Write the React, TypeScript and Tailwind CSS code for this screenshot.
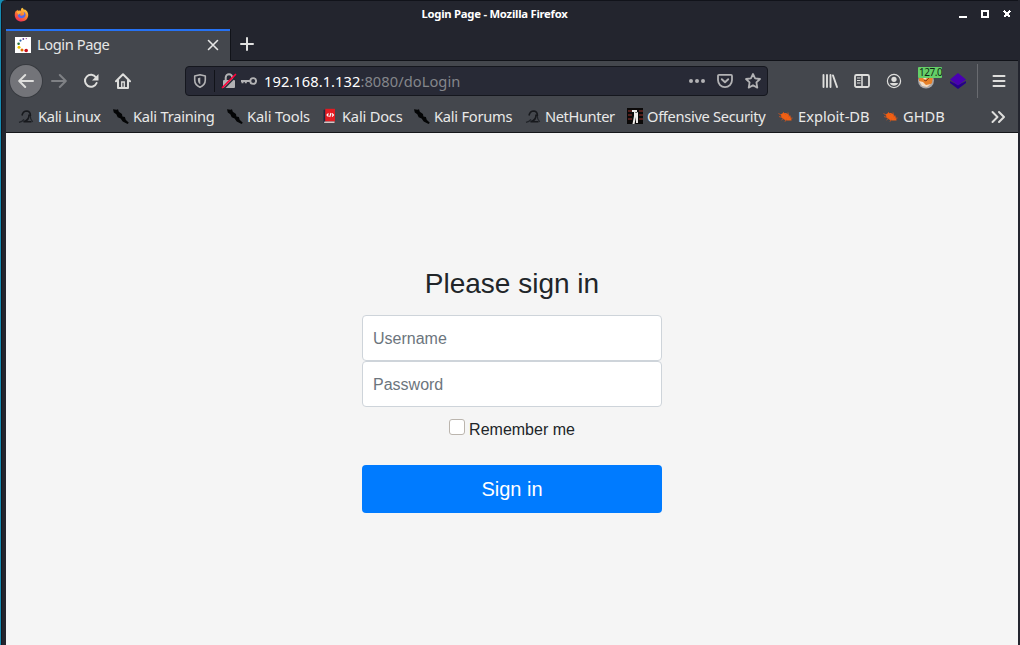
import React from "react";

type IconProps = { className?: string };

function FirefoxLogo({ className }: IconProps) {
  return (
    <svg viewBox="0 0 16 16" className={className}>
      <defs>
        <linearGradient id="fox" x1="0.8" y1="0" x2="0.25" y2="1">
          <stop offset="0" stopColor="#ffe04a" />
          <stop offset="0.45" stopColor="#ff8a2a" />
          <stop offset="1" stopColor="#f0285a" />
        </linearGradient>
      </defs>
      <path d="M8.8.7c1 .6 1.500 1.500 1.800 2.400.4-.1.7-.3.8-.7C14 4 15.200 6.200 15.200 8.500c0 4-3.200 6.900-7.200 6.900S.8 12.300.8 8.400c0-2 .6-3.600 1.700-4.900l.4 1 .8-1.700.8 1.200c1-.3 2-.4 2.900 0C7.100 2.600 7.700 1.500 8.800.7z" fill="url(#fox)" />
      <path d="M5 6.500c1 .1 1.700.2 2.700.1-.4.7-1.200.9-1.700 1.300.4 1.500 3 1.700 4.300.7 1.200-1 .7-2.600-.5-3.600 2 .6 3 2.100 2.500 4-.5 1.900-2.200 3-4.200 3-2.500 0-4.100-1.700-4.100-3.500 0-.8.300-1.500 1-2z" fill="#5368e8" />
      <path d="M2.800 5c1.100-.7 2.500-.8 4-.3l1.100 1.900-2 .6c-.7.5-.9 1-.7 1.700" fill="#ffad3b" />
    </svg>
  );
}

function DotsLogo() {
  return (
    <svg viewBox="0 0 16 16" className="h-4 w-4">
      <path fill="#fff" d="M0 0h16v16H0z" />
      <circle cx="11.300" cy="1.600" r=".7" fill="#a33b9c" />
      <circle cx="8.300" cy="2" r=".9" fill="#5b3d9a" />
      <circle cx="5.500" cy="3.600" r="1.100" fill="#3166ad" />
      <circle cx="3.600" cy="6.700" r="1.300" fill="#26723b" />
      <circle cx="4" cy="10.300" r="1.500" fill="#edc400" />
      <circle cx="7" cy="12.900" r="1.500" fill="#dc7100" />
      <circle cx="11.200" cy="13.500" r="1.800" fill="#cb101c" />
    </svg>
  );
}

function KaliDragon() {
  return (
    <svg viewBox="0 0 16 16" className="h-4 w-4">
      <path d="M1 14.400c2.500-.4 4-1.500 5-3M12.200 7.500c0 3 .6 4.600 2.600 6.400" fill="none" stroke="#202328" strokeWidth="1.200" />
      <path d="M4 7.500C4.500 4.500 6.500 3 9 3c2.200.3 3.500 2.500 3.400 5M11 6.500c.3 4-2 6.300-5.500 7.300h8" fill="none" stroke="#17191d" strokeWidth="1.600" />
    </svg>
  );
}

function KaliTool() {
  return (
    <svg viewBox="0 0 16 16" className="h-4 w-4">
      <path d="M0 1.200l3.600.5 1.400-.5.8 2.600 3.200 2.100.4 2.500 2.500.7.8 2.700 3.100 2.900-1.200 1.200-4.900-2.500-2.100-3-2.900-1.200-1.400-3-2.500-1.800z" fill="#040506" />
    </svg>
  );
}

function DocsIcon() {
  return (
    <svg viewBox="0 0 16 16" className="h-4 w-4">
      <path d="M1.500 2l3-1v13l-3 1z" fill="#20283e" />
      <path d="M3.200.8H13v12.700H3.200z" fill="#e31b22" />
      <path d="M2.500 13.500h10V15H2z" fill="#d4c5c5" />
      <path d="M6.500 5.500L5 7l1.500 1.500M10 5.500L11.500 7 10 8.500M9 5L7.700 9" stroke="#fff" strokeWidth="1.100" fill="none" />
    </svg>
  );
}

function OffsecIcon() {
  return (
    <svg viewBox="0 0 16 16" className="h-4 w-4">
      <path d="M0 0h16v16H0z" fill="#0b0909" />
      <path d="M1 3h4M1 7h4M1 11h4M12 3h4M12 7h4M12 11h4" stroke="#6c2520" strokeWidth="1.500" />
      <path d="M5 2h5v2H8.500v1L11 4v11H9V9l-1.500 7H5.500L7 8V4H5z" fill="#eeebe8" />
    </svg>
  );
}

function BugIcon() {
  return (
    <svg viewBox="0 0 16 16" className="h-4 w-4">
      <path d="M3 6.300c2-1.800 5.300-1.500 7.300.1 2 1.500 3 3.500 3.300 6-3.500.4-6.700 0-9-2C3.200 9 2.500 7.500 3 6.300z" fill="#f16013" />
      <path d="M1 8.500L4 9.500M3.500 12l2.500-2M7 13.700l1.500-3M5 4l3 3M10 4.500l.5 4M13 8l-3 1M.5 5.500L4 7.500M14.500 10l-3 .5" stroke="#d9561b" strokeWidth=".8" />
    </svg>
  );
}

const line = { fill: "none", stroke: "currentColor", strokeLinecap: "round" as const, strokeLinejoin: "round" as const };

function BackIcon() {
  return <svg viewBox="0 0 16 16" className="h-4 w-4"><path {...line} strokeWidth="2" d="M7.200 2L1.200 8l6 6M1.700 8H15" /></svg>;
}
function ForwardIcon() {
  return <svg viewBox="0 0 16 16" className="h-4 w-4"><path {...line} strokeWidth="2" d="M8.800 2l6 6-6 6M14.300 8H1" /></svg>;
}
function ReloadIcon() {
  return <svg viewBox="0 0 16 16" className="h-4 w-4"><path {...line} strokeWidth="2" d="M13 4.500A6 6 0 1 0 13.600 10" /><path d="M15.500 1v6.500H9z" fill="currentColor" /></svg>;
}
function HomeIcon() {
  return <svg viewBox="0 0 16 16" className="h-4 w-4"><path {...line} strokeWidth="2" d="M1 8.200L8 1.300l7 6.900M3 7.500V15h10V7.500" /><path d="M6.700 9h2.600v5.500H6.700z" fill="none" stroke="currentColor" strokeWidth="1.300" /></svg>;
}
function ShieldIcon() {
  return <svg viewBox="0 0 16 16" className="h-4 w-4"><path {...line} strokeWidth="1.600" d="M8 1.700l5.300 1.300v4c0 3.400-2 5.800-5.300 7.300C4.700 12.800 2.700 10.400 2.700 7V3z" /><path d="M8.300 4.600v6.700C6.600 10.200 5.900 9 5.900 7V5.200z" fill="currentColor" /></svg>;
}
function InsecureIcon() {
  return <svg viewBox="0 0 16 16" className="h-4 w-4"><path {...line} strokeWidth="2" d="M4.700 7V4.600a3.300 3.300 0 0 1 6.600 0V7" /><path d="M3 7h10a1 1 0 0 1 1 1v6a1 1 0 0 1-1 1H3a1 1 0 0 1-1-1V8a1 1 0 0 1 1-1z" fill="currentColor" /><path d="M2.500 16L15.500 3" stroke="#282a36" strokeWidth="1.500" /><path d="M1.500 14.500L14.500 1.500" stroke="#ff0039" strokeWidth="1.700" strokeLinecap="round" /></svg>;
}
function KeyIcon() {
  return <svg viewBox="0 0 16 16" className="h-4 w-4"><circle cx="12.200" cy="8" r="2.900" {...line} strokeWidth="1.900" /><path d="M9.500 8H0M1.500 8v2.300M4.800 8v2.300" fill="none" stroke="currentColor" strokeWidth="2" /></svg>;
}
function PocketIcon() {
  return <svg viewBox="0 0 16 16" className="h-4 w-4"><path {...line} strokeWidth="1.800" d="M2 1.900h12a1 1 0 0 1 1 1v4.200a7 7 0 0 1-14 0V2.900a1 1 0 0 1 1-1z" /><path {...line} strokeWidth="1.900" d="M4.800 6.200L8 9.300l3.200-3.100" /></svg>;
}
function StarIcon() {
  return <svg viewBox="0 0 16 16" className="h-4 w-4"><path {...line} strokeWidth="1.800" d="M8 1l2.100 4.400 4.900.6-3.600 3.400.9 5.200L8 12.200l-4.300 2.400.9-5.200L1 6l4.900-.6z" /></svg>;
}
function LibraryIcon() {
  return <svg viewBox="0 0 16 16" className="h-4 w-4"><path {...line} strokeWidth="1.900" d="M1.500 2v12M5 2v12M8.500 2v12M11 2.500L15 14" /></svg>;
}
function SidebarIcon() {
  return <svg viewBox="0 0 16 16" className="h-4 w-4"><rect x="1" y="2" width="14" height="12" rx="1.500" {...line} strokeWidth="1.800" /><path d="M8 2v12" stroke="currentColor" strokeWidth="1.500" /><path d="M3 5h3.500M3 7.500h3.500M3 10h3.500" stroke="currentColor" strokeWidth="1" /></svg>;
}
function AccountIcon() {
  return <svg viewBox="0 0 16 16" className="h-4 w-4"><circle cx="8" cy="8" r="6.600" {...line} strokeWidth="1.200" /><circle cx="8" cy="6.300" r="2.600" fill="currentColor" /><path d="M3.700 10.300c2.800-.5 5.800-.5 8.600 0a5 5 0 0 1-8.600 0z" fill="currentColor" /></svg>;
}
function FoxyProxyIcon() {
  return <svg viewBox="0 0 18 18" className="h-[18px] w-[18px]"><circle cx="9" cy="8.500" r="8" fill="#a8a7aa" /><path d="M2 5l5 1 2-2 2 2 5-2-1 7-5 4-5-2-3-4z" fill="#e88128" /><path d="M2 9l4 1 3 3 5-1-4 3-5-1zM5 5l3 3 2-2" fill="#f1ddc6" /><path d="M7 8l2 1 3-3" stroke="#864018" fill="none" /></svg>;
}
function LayersIcon() {
  return <svg viewBox="0 0 18 18" className="h-[18px] w-[18px]"><path d="M1 9l8 4 8-4v2l-8 6-8-6z" fill="#26008a" /><path d="M9 1l8 6.500L9 13.500 1 7.500z" fill="#4900b2" /></svg>;
}

type Bookmark = { title: string; cell: string; icon: React.ReactNode };

const bookmarks: Bookmark[] = [
  { title: "Kali Linux", cell: "w-[95px] tracking-[-0.32px]", icon: <KaliDragon /> },
  { title: "Kali Training", cell: "w-[114px] tracking-[-0.24px]", icon: <KaliTool /> },
  { title: "Kali Tools", cell: "w-[95px] tracking-[-0.14px]", icon: <KaliTool /> },
  { title: "Kali Docs", cell: "w-[92px] tracking-[-0.2px]", icon: <DocsIcon /> },
  { title: "Kali Forums", cell: "w-[111px] tracking-[-0.24px]", icon: <KaliTool /> },
  { title: "NetHunter", cell: "w-[102px] tracking-[-0.4px]", icon: <KaliDragon /> },
  { title: "Offensive Security", cell: "w-[151px] tracking-[-0.32px]", icon: <OffsecIcon /> },
  { title: "Exploit-DB", cell: "w-[105px]", icon: <BugIcon /> },
  { title: "GHDB", cell: "w-[62px]", icon: <BugIcon /> },
];

function TitleBar() {
  return (
    <header className="flex h-[29px] items-center border-t border-[#11131a] pb-[2px] pl-2 pr-[2px]">
      <FirefoxLogo className="h-[15px] w-[15px]" />
      <h1 className="flex-1 pl-px text-center text-[11.3px] leading-4 font-bold tracking-[-0.25px] text-white">Login Page - Mozilla Firefox</h1>
      <svg viewBox="0 0 54 10" className="mr-[3px] h-[10px] w-[54px] text-white" shapeRendering="crispEdges">
        <path d="M0 7h8v2H0z" fill="currentColor" />
        <path d="M23 2h6v6h-6z" fill="none" stroke="currentColor" strokeWidth="2" />
        <path d="M45 2l6 6M51 2l-6 6" stroke="currentColor" strokeWidth="2.400" />
      </svg>
    </header>
  );
}

function TabStrip() {
  return (
    <div className="flex h-8">
      <div className="flex w-56 items-center border-t-2 border-[#2672f3] bg-[#44474d] pb-1 pl-[9px] pr-[11px] text-[#e6e6e6]">
        <span className="mt-[2px]"><DotsLogo /></span>
        <span className="ml-[6px] flex-1 text-[14.67px] leading-5 tracking-[-0.42px]">Login Page</span>
        <svg viewBox="0 0 12 12" className="mt-[2px] h-3 w-3"><path d="M1.500 1.500l9 9M10.500 1.500l-9 9" {...line} strokeWidth="1.600" /></svg>
      </div>
      <div className="flex flex-1 items-center border-l border-b border-[#111319] pb-[2px] pl-2 text-[#e0e0df]">
        <svg viewBox="0 0 16 16" className="h-4 w-4"><path d="M8 2v12M2 8h12" {...line} strokeWidth="2" /></svg>
      </div>
    </div>
  );
}

function NavigationBar() {
  return (
    <nav className="flex h-10 items-center pl-1 text-[#dededc]">
      <button className="flex h-8 w-8 items-center justify-center rounded-full bg-[#737479] shadow-[0_0_0_1px_#383b40]"><BackIcon /></button>
      <div className="ml-[9px] flex gap-4"><span className="text-[#7f8185]"><ForwardIcon /></span><ReloadIcon /><HomeIcon /></div>
      <div className="ml-[54px] flex h-[30px] w-[583px] items-center rounded border border-[#15171e] bg-[#282a36] pl-[6px] pr-[6px] text-[#b2b2b4]">
        <ShieldIcon />
        <div className="mr-[6px] ml-[6px] h-[22px] w-px bg-[#111319]" />
        <InsecureIcon />
        <span className="ml-1"><KeyIcon /></span>
        <span className="ml-[7px] flex-1 text-[14.67px] leading-5 tracking-[0.06px] text-[#84868b]"><span className="text-white">192.168.1.132</span>:8080/doLogin</span>
        <svg viewBox="0 0 16 16" className="h-4 w-4"><circle cx="2" cy="8" r="2" fill="currentColor" /><circle cx="8" cy="8" r="2" fill="currentColor" /><circle cx="14" cy="8" r="2" fill="currentColor" /></svg>
        <span className="ml-3"><PocketIcon /></span>
        <span className="ml-3"><StarIcon /></span>
      </div>
      <div className="ml-[54px] flex items-center gap-4">
        <LibraryIcon /><SidebarIcon /><AccountIcon />
        <span className="relative -mx-px">
          <FoxyProxyIcon />
          <span className="absolute -top-[5px] left-px flex h-[11px] w-6 items-center overflow-hidden rounded-[1px] bg-[#65cf68] pl-px text-[10px] leading-[11px] tracking-[-0.45px] text-[#102814]">127.0</span>
        </span>
        <span className="-ml-px"><LayersIcon /></span>
      </div>
      <div className="ml-[10px] h-[34px] w-px bg-[#696b70]" />
      <svg viewBox="0 0 16 16" className="ml-[13px] h-4 w-4"><path d="M2.500 3h11M2.500 8h11M2.500 13h11" {...line} strokeWidth="2" /></svg>
    </nav>
  );
}

function BookmarksBar() {
  return (
    <div className="flex h-8 items-center border-b border-[#14161a] pb-[2px] pl-3 text-[14.67px] text-[#e9e9e8]">
      {bookmarks.map(({ title, cell, icon }) => (
        <a key={title} className={`flex shrink-0 items-center gap-1 whitespace-nowrap leading-5 ${cell}`}>{icon}<span>{title}</span></a>
      ))}
      <svg viewBox="0 0 16 16" className="mt-[2px] mr-3 ml-auto h-4 w-4 text-[#dededc]"><path d="M2.500 3l5 5-5 5M9 3l5 5-5 5" {...line} strokeWidth="2" /></svg>
    </div>
  );
}

function LoginForm() {
  return (
    <main className="flex flex-1 flex-col items-center bg-[#f5f5f5] pt-[134px] font-['Liberation_Sans',Arial,sans-serif] text-[#212529]">
      <form className="flex w-[300px] flex-col items-center" onSubmit={(event) => event.preventDefault()}>
        <h2 className="mb-[14px] text-[28px] leading-[34px]">Please sign in</h2>
        <input className="h-[46px] w-full rounded border border-[#ced4da] bg-white px-[10px] pt-[2px] text-base placeholder:text-[#6c757d]" aria-label="Username" placeholder="Username" />
        <input className="h-[46px] w-full rounded border border-[#ced4da] bg-white px-[10px] pt-[2px] text-base placeholder:text-[#6c757d]" type="password" aria-label="Password" placeholder="Password" />
        <label className="mt-[11px] flex h-6 items-start text-base leading-6">
          <input type="checkbox" className="mt-px mr-1 h-4 w-4 appearance-none rounded-[3px] border border-[#bbb5ae] bg-white" />Remember me
        </label>
        <button className="mt-[23px] h-12 w-full rounded-[4px] bg-[#007bff] text-xl leading-[30px] text-white">Sign in</button>
      </form>
    </main>
  );
}

export default function App() {
  return (
    <div className="h-[645px] w-[1020px] overflow-hidden bg-[#168bb2] pl-px font-['Noto_Sans',sans-serif]">
      <div className="flex h-full flex-col rounded-tl-[5px] border-l border-[#15171f] bg-[#23252e] pl-1 pr-[2px]">
        <TitleBar />
        <TabStrip />
        <div className="bg-[#44474d]"><NavigationBar /><BookmarksBar /></div>
        <LoginForm />
      </div>
    </div>
  );
}
